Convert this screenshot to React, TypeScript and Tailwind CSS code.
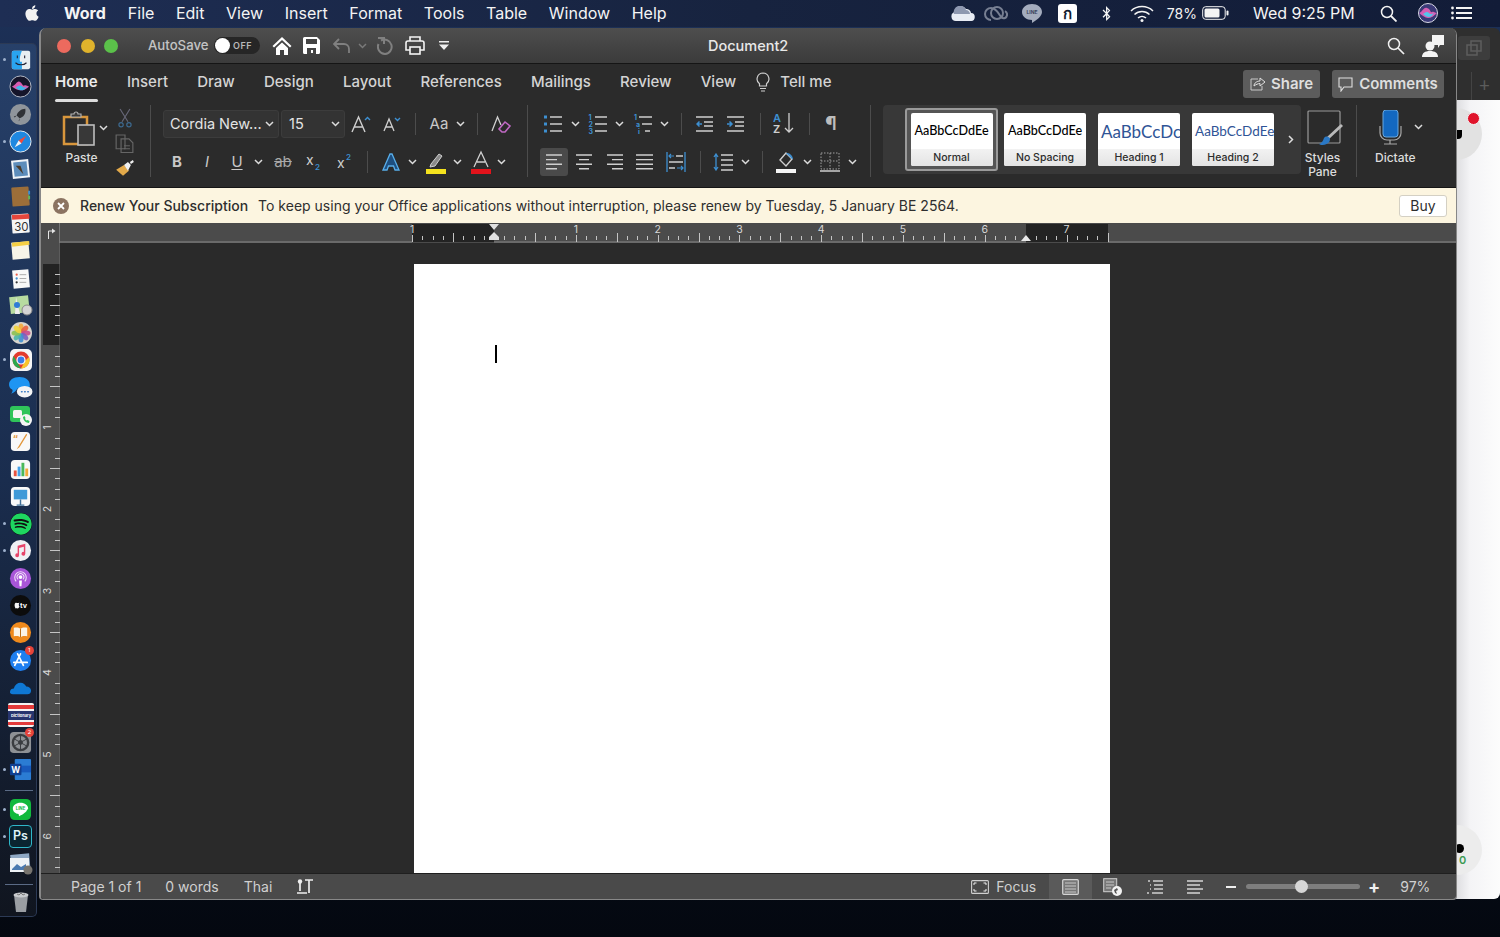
import type { ReactNode } from 'react';
import { FaApple, FaBluetoothB, FaSpotify } from 'react-icons/fa';

const ink = '#cfcfcf';
const blue = '#3d8fd1';

function Chev({ color = '#dcdcdc' }: { color?: string }) {
  return (
    <svg width="9" height="6" viewBox="0 0 9 6" className="shrink-0">
      <path d="M1 1l3.5 3.5L8 1" fill="none" stroke={color} strokeWidth="1.5" />
    </svg>
  );
}

function Sep({ c }: { c: string }) {
  return (
    <div className={`${c} flex shrink-0 justify-center`}>
      <div className="h-[22px] w-px bg-[#4c4c4c]" />
    </div>
  );
}

function S({ c, children }: { c: string; children: ReactNode }) {
  return <div className={`${c} flex h-7 shrink-0 items-center justify-center`}>{children}</div>;
}

function Lines({ rows }: { rows: number[][] }) {
  return (
    <svg width="20" height="18" viewBox="0 0 20 18">
      {rows.map(([a, b], i) => (
        <path key={i} d={`M${a} ${2 + i * 4.6}H${b}`} stroke={ink} strokeWidth="1.4" />
      ))}
    </svg>
  );
}

function ListIcon({ kind }: { kind: 'bullet' | 'number' | 'multi' }) {
  return (
    <svg width="20" height="20" viewBox="0 0 20 20">
      {[3, 10, 17].map((y, i) =>
        kind === 'bullet' ? (
          <g key={y}>
            <rect x="1" y={y - 1.5} width="3" height="3" fill={blue} />
            <path d={`M7 ${y}H19`} stroke={ink} strokeWidth="1.3" />
          </g>
        ) : kind === 'number' ? (
          <g key={y}>
            <text x="0.5" y={y + 2.5} fontSize="7" fontWeight="700" fill={blue}>{i + 1}</text>
            <path d={`M7 ${y}H19`} stroke={ink} strokeWidth="1.3" />
          </g>
        ) : (
          <g key={y}>
            <text x={1 + i * 2} y={y + 2.5} fontSize="7" fontWeight="700" fill={blue}>{['1', 'a', 'i'][i]}</text>
            <path d={`M${6 + i * 3} ${y}H${i === 2 ? 17 : 19}`} stroke={ink} strokeWidth="1.3" />
          </g>
        ),
      )}
    </svg>
  );
}

function IndentIcon({ out }: { out?: boolean }) {
  return (
    <svg width="18" height="18" viewBox="0 0 18 18">
      <path d="M0 2H17M8 7H17M8 11H17M0 16H17" stroke={ink} strokeWidth="1.3" />
      <path d={out ? 'M6 9H1M3.5 6.5L1 9l2.5 2.5' : 'M0 9H5M2.5 6.5L5 9l-2.5 2.5'} fill="none" stroke={blue} strokeWidth="1.5" />
    </svg>
  );
}

function Ribbon() {
  return (
    <div className="flex h-[87px] shrink-0 bg-[#2b2b2b]">
      {/* clipboard */}
      <div className="relative mt-[5px] flex h-[72px] w-[110px] shrink-0 self-start border-r border-[#4c4c4c]">
        <div className="flex w-[71px] flex-col items-center pl-[10px] pt-[5px]">
          <div className="flex items-center gap-[3px]">
            <svg width="34" height="36" viewBox="0 0 34 36" className="ml-[6px]">
              <path d="M2 7h23v27H2z" fill="none" stroke="#d8963c" strokeWidth="2.5" />
              <path d="M9 7V4h3a2 2 0 014 0h3v3z" fill="#3a3a3a" stroke="#b0b0b0" strokeWidth="1.2" />
              <rect x="16" y="15" width="16" height="20" fill="#383838" stroke="#bdbdbd" strokeWidth="1.6" />
            </svg>
            <Chev />
          </div>
          <div className="mt-[3px] text-[12px] font-medium text-[#dcdcdc]">Paste</div>
        </div>
        <div className="flex w-[26px] flex-col items-center gap-[6px] pt-[3px]">
          <svg width="14" height="20" viewBox="0 0 14 20">
            <path d="M2 1l8 13M12 1L4 14" stroke="#667" strokeWidth="1.2" />
            <circle cx="3" cy="17" r="2.2" fill="none" stroke="#3d6a90" strokeWidth="1.2" />
            <circle cx="11" cy="17" r="2.2" fill="none" stroke="#3d6a90" strokeWidth="1.2" />
          </svg>
          <svg width="20" height="20" viewBox="0 0 20 20">
            <path d="M1 1h9v14H1zM6 5h8l4 4v10H6z" fill="#2b2b2b" stroke="#666" strokeWidth="1.2" />
            <path d="M9 12h6M9 15h6" stroke="#666" />
          </svg>
          <svg width="20" height="18" viewBox="0 0 20 18">
            <path d="M1 11l8-5 5 6-6 5z" fill="#e2a94a" />
            <path d="M9 6l4-3 3 3-3 6zM15 3l3-2 1 2-3 2z" fill="#f0f0f0" />
          </svg>
        </div>
      </div>

      {/* font */}
      <div className="mt-[5px] flex h-[72px] w-[377px] shrink-0 flex-col gap-[10px] self-start border-r border-[#4c4c4c] pl-[12px] pt-[5px]">
        <div className="flex h-7 items-center">
          <div className="flex h-7 w-[116px] items-center justify-between rounded-[3px] border border-[#3c3c3c] bg-[#333333] pl-[6px] pr-[4px] text-[14.5px] text-[#e4e4e4]">
            Cordia New...
            <Chev />
          </div>
          <div className="ml-[2px] flex h-7 w-[64px] items-center justify-between rounded-[3px] border border-[#3c3c3c] bg-[#333333] pl-[7px] pr-[4px] text-[14.5px] text-[#e4e4e4]">
            15
            <Chev />
          </div>
          <S c="w-[32px]">
            <svg width="20" height="18" viewBox="0 0 20 18">
              <path d="M1 17L7.5 2 14 17M3.5 12h8" fill="none" stroke={ink} strokeWidth="1.4" />
              <path d="M14 5l2.5-2.5L19 5" fill="none" stroke={blue} strokeWidth="1.4" />
            </svg>
          </S>
          <S c="w-[30px]">
            <svg width="18" height="16" viewBox="0 0 18 16">
              <path d="M1 15L6 3l5 12M3 11h6" fill="none" stroke={ink} strokeWidth="1.3" />
              <path d="M12 2l2.5 2.5L17 2" fill="none" stroke={blue} strokeWidth="1.4" />
            </svg>
          </S>
          <Sep c="w-[16px]" />
          <S c="w-[32px]"><span className="text-[15px] text-[#c8c8c8]">Aa</span></S>
          <S c="w-[10px]"><Chev /></S>
          <Sep c="w-[24px]" />
          <S c="w-[24px]">
            <svg width="20" height="18" viewBox="0 0 20 18">
              <path d="M1 16L6.5 2 10 10" fill="none" stroke={ink} strokeWidth="1.3" />
              <path d="M8 14l6-7 5 4-5 6h-3z" fill="none" stroke="#c069c4" strokeWidth="1.6" />
            </svg>
          </S>
        </div>
        <div className="flex h-7 items-center text-[#c8c8c8]">
          <S c="w-[28px]"><span className="text-[15px] font-bold">B</span></S>
          <S c="w-[32px]"><span className="text-[15px] italic">I</span></S>
          <S c="w-[28px]"><span className="text-[15px] underline underline-offset-2">U</span></S>
          <S c="w-[14px]"><Chev /></S>
          <S c="w-[36px]">
            <span className="text-[15px] text-[#a8a8a8] line-through">ab</span>
          </S>
          <S c="w-[26px]">
            <svg width="16" height="22" viewBox="0 0 16 22">
              <text x="0" y="14" fontSize="14" fill={ink}>x</text>
              <text x="9" y="19" fontSize="8" fontWeight="600" fill={blue}>2</text>
            </svg>
          </S>
          <S c="w-[36px]">
            <svg width="16" height="22" viewBox="0 0 16 22">
              <text x="0" y="17" fontSize="14" fill={ink}>x</text>
              <text x="9" y="9" fontSize="8" fontWeight="600" fill={blue}>2</text>
            </svg>
          </S>
          <Sep c="w-[8px]" />
          <S c="ml-[7px] w-[26px]">
            <svg width="20" height="20" viewBox="0 0 20 20">
              <path d="M2 18L9 2h2l7 16h-4l-1.5-4h-5L6 18z" fill="#1e4f80" stroke="#58aeea" strokeWidth="1.3" />
            </svg>
          </S>
          <S c="w-[16px]"><Chev /></S>
          <S c="w-[32px]">
            <svg width="22" height="24" viewBox="0 0 22 24">
              <path d="M6 14l8-10 3 2-7 10-5 1z" fill="#8a8a8a" stroke={ink} strokeWidth="1" />
              <rect x="1" y="19" width="20" height="5" fill="#f4e21e" />
            </svg>
          </S>
          <S c="w-[10px]"><Chev /></S>
          <S c="ml-[2px] w-[34px]">
            <svg width="20" height="24" viewBox="0 0 20 24">
              <path d="M3 17L10 2l7 15M6 12h8" fill="none" stroke={ink} strokeWidth="1.3" />
              <rect x="0" y="19" width="20" height="5" fill="#e2131b" />
            </svg>
          </S>
          <S c="w-[6px]"><Chev /></S>
        </div>
      </div>

      {/* paragraph */}
      <div className="mt-[5px] flex h-[72px] w-[343px] shrink-0 flex-col gap-[10px] self-start border-r border-[#4c4c4c] pl-[12px] pt-[5px]">
        <div className="flex h-7 items-center">
          <S c="w-[26px]"><ListIcon kind="bullet" /></S>
          <S c="w-[18px]"><Chev /></S>
          <S c="w-[28px]"><ListIcon kind="number" /></S>
          <S c="w-[14px]"><Chev /></S>
          <S c="w-[34px]"><ListIcon kind="multi" /></S>
          <S c="w-[8px]"><Chev /></S>
          <Sep c="w-[26px]" />
          <S c="w-[22px]"><IndentIcon out /></S>
          <S c="w-[40px]"><IndentIcon /></S>
          <Sep c="w-[8px]" />
          <S c="w-[40px]">
            <svg width="22" height="28" viewBox="0 -3 22 28">
              <text x="0" y="9" fontSize="11" fontWeight="600" fill={blue}>A</text>
              <text x="0" y="20" fontSize="11" fontWeight="600" fill={ink}>Z</text>
              <path d="M16 0v19M12 15l4 4 4-4" fill="none" stroke={ink} strokeWidth="1.3" />
            </svg>
          </S>
          <Sep c="w-[10px]" />
          <S c="w-[34px]"><span className="text-[19px] font-bold text-[#bdbdbd]">¶</span></S>
        </div>
        <div className="flex h-7 items-center">
          <S c="w-[28px] rounded-[3px] bg-[#4a4a4a]"><Lines rows={[[2, 18], [2, 13], [2, 18], [2, 13]]} /></S>
          <S c="w-[32px]"><Lines rows={[[2, 18], [5, 15], [2, 18], [5, 15]]} /></S>
          <S c="w-[30px]"><Lines rows={[[2, 18], [7, 18], [2, 18], [7, 18]]} /></S>
          <S c="w-[30px]"><Lines rows={[[1, 18], [1, 18], [1, 18], [1, 18]]} /></S>
          <S c="w-[32px]">
            <svg width="20" height="20" viewBox="0 0 20 20">
              <path d="M1 0v20M19 0v20" stroke={blue} strokeWidth="1.3" />
              <path d="M10 4h7M3 10h14M3 16h6" stroke={ink} strokeWidth="1.3" />
              <path d="M8 4H3M5 2L3 4l2 2M11 16h6M15 14l2 2-2 2" fill="none" stroke={blue} strokeWidth="1.2" />
            </svg>
          </S>
          <Sep c="w-[16px]" />
          <S c="w-[30px]">
            <svg width="20" height="18" viewBox="0 0 20 18">
              <path d="M8 2h12M8 7h12M8 12h12M8 17h12" stroke={ink} strokeWidth="1.3" />
              <path d="M3 1v16M1 4l2-3 2 3M1 14l2 3 2-3" fill="none" stroke={blue} strokeWidth="1.3" />
            </svg>
          </S>
          <S c="w-[14px]"><Chev /></S>
          <Sep c="w-[20px]" />
          <S c="w-[28px]">
            <svg width="20" height="22" viewBox="0 0 20 22">
              <path d="M4 9l6-7 6 6-6 7z" fill="none" stroke={ink} strokeWidth="1.4" />
              <path d="M10 2c3 0 6 1 7 6l-1 0-6-6z" fill={blue} />
              <rect x="0" y="18" width="20" height="4" fill="#f5f5f5" />
            </svg>
          </S>
          <S c="w-[14px]"><Chev /></S>
          <S c="w-[32px]">
            <svg width="20" height="20" viewBox="0 0 20 20">
              <rect x="1" y="1" width="18" height="16" fill="none" stroke="#a0a0a0" strokeDasharray="1.5 1.5" />
              <path d="M10 1v16M1 9h18" stroke="#a0a0a0" strokeDasharray="1.5 1.5" />
              <path d="M0 19h20" stroke={ink} strokeWidth="1.5" />
            </svg>
          </S>
          <S c="w-[12px]"><Chev /></S>
        </div>
      </div>

      {/* styles gallery */}
      <div className="ml-[12px] mt-[5px] flex h-[69px] w-[418px] shrink-0 items-center self-start rounded-[4px] bg-[#383838] pl-[22px]">
        <div className="flex h-[63px] w-[93px] shrink-0 items-center justify-center rounded-[3px] border-2 border-[#9a9a9a] bg-[#555555]">
          <StyleCard name="Normal" preview={<span className="font-['Lato',sans-serif] text-[12.6px] font-medium text-black">AaBbCcDdEe</span>} />
        </div>
        <div className="ml-[6px]">
          <StyleCard name="No Spacing" preview={<span className="font-['Lato',sans-serif] text-[12.6px] font-medium text-black">AaBbCcDdEe</span>} />
        </div>
        <div className="ml-[12px]">
          <StyleCard name="Heading 1" preview={<span className="pl-[3px] font-['Lato',sans-serif] text-[17px] text-[#2f5496]">AaBbCcDc</span>} left />
        </div>
        <div className="ml-[12px]">
          <StyleCard name="Heading 2" preview={<span className="pl-[3px] font-['Lato',sans-serif] text-[13.5px] text-[#2f5496]">AaBbCcDdEe</span>} left />
        </div>
        <div className="ml-[12px] flex w-[9px] justify-center">
          <svg width="6" height="9" viewBox="0 0 6 9">
            <path d="M1 1l3.5 3.5L1 8" fill="none" stroke="#ddd" strokeWidth="1.5" />
          </svg>
        </div>
      </div>

      {/* styles pane */}
      <div className="mt-[5px] flex h-[72px] w-[56px] shrink-0 flex-col items-center self-start border-r border-[#4c4c4c] pr-[12px] pt-[5px] text-center text-[12px] font-medium leading-[14px] text-[#dcdcdc]">
        <svg width="38" height="36" viewBox="0 0 38 36" className="ml-[4px] shrink-0">
          <rect x="2" y="1" width="32" height="32" rx="1" fill="none" stroke="#9a9a9a" strokeWidth="1.2" />
          <path d="M36 15L22 28" stroke="#b9b9b9" strokeWidth="3" />
          <path d="M15 35c5 0 9-2 9-6 0-2-3-3-5-2-2 1-1 5-6 7z" fill="#2a78c5" />
        </svg>
        <div className="mt-[5px]">Styles<br />Pane</div>
      </div>

      {/* dictate */}
      <div className="flex w-[99px] shrink-0 flex-col items-start pt-[10px]">
        <div className="flex w-full items-start pl-[21px]">
          <svg width="24" height="35" viewBox="0 0 24 35">
            <rect x="5" y="0" width="15" height="27" rx="3" fill="#1368c0" stroke="#6aa8de" />
            <path d="M2 16v7a7 7 0 007 7h7a7 7 0 007-7v-7M12 30v4M6 34h13" fill="none" stroke="#a8a8a8" strokeWidth="1.2" />
          </svg>
          <div className="ml-[12px] mt-[14px]"><Chev /></div>
        </div>
        <div className="ml-[18px] mt-[4px] text-[12px] font-medium text-[#dcdcdc]">Dictate</div>
      </div>
    </div>
  );
}

function StyleCard({ name, preview, left }: { name: string; preview: ReactNode; left?: boolean }) {
  return (
    <div className="flex h-[53px] w-[82px] shrink-0 flex-col overflow-hidden rounded-[2px] bg-white">
      <div className={`flex h-[36px] items-center overflow-hidden whitespace-nowrap pt-[1px] ${left ? 'justify-start' : 'justify-center'}`}>{preview}</div>
      <div className="flex h-[17px] items-center justify-center bg-gradient-to-b from-[#f2f2f2] to-[#e4e4e4] text-[10.5px] font-medium text-[#2c2c2c]">
        {name}
      </div>
    </div>
  );
}

function HRuler() {
  const zero = 494;
  const step = 81.8 / 8;
  const ticks = Array.from({ length: 69 }, (_, i) => i - 8);
  return (
    <svg width="1396" height="20" viewBox="60 223 1396 20" className="block">
      <rect x="60" y="223" width="1396" height="20" fill="#4b4b4b" />
      <rect x="412" y="224" width="82" height="18" fill="#232323" />
      <rect x="1026" y="224" width="82" height="18" fill="#232323" />
      <rect x="60" y="241.5" width="352" height="1" fill="#8a8a8a" />
      <rect x="494" y="241.5" width="532" height="1" fill="#8a8a8a" />
      <rect x="1108" y="241.5" width="348" height="1" fill="#8a8a8a" />
      {ticks.map((t) => {
        const x = Math.round(zero + t * step) + 0.5;
        if (t === 0 || t === 52) return null;
        const top = t % 8 === 0 ? 235 : t % 4 === 0 ? 233 : 236;
        const end = t % 8 === 0 || t % 4 === 0 ? 242 : 240;
        return <path key={t} d={`M${x} ${top}V${end}`} stroke="#c4c4c4" strokeWidth="1" />;
      })}
      {[-1, 1, 2, 3, 4, 5, 6, 7].map((n) => (
        <text key={n} x={zero + n * 81.8} y="233" fontSize="10.5" textAnchor="middle" fill="#d8d8d8">
          {Math.abs(n)}
        </text>
      ))}
      <path d="M489 224h10l-5 6zM489 237l5-5 5 5v3h-10z" fill="#e0e0e0" />
      <path d="M1021 241l5-6 5 6z" fill="#e8e8e8" />
    </svg>
  );
}

function VRuler() {
  const zero = 345.5;
  const step = 81.8 / 8;
  const ticks = Array.from({ length: 60 }, (_, i) => i - 8);
  return (
    <svg width="19" height="630" viewBox="41 243 19 630" className="block shrink-0">
      <rect x="41" y="243" width="19" height="630" fill="#4b4b4b" />
      <rect x="43" y="264" width="17" height="81" fill="#232323" />
      <rect x="59.5" y="243" width="1" height="630" fill="#6f6f6f" />
      {ticks.map((t) => {
        if (t % 8 === 0) return null;
        const y = Math.round(zero + t * step) + 0.5;
        const half = t % 4 === 0;
        return <path key={t} d={`M${half ? 50 : 55} ${y}H60`} stroke="#c4c4c4" strokeWidth="1" />;
      })}
      {[1, 2, 3, 4, 5, 6].map((n) => (
        <text key={n} x="0" y="0" fontSize="10.5" textAnchor="middle" fill="#d8d8d8" transform={`translate(51 ${zero + n * 81.8}) rotate(-90)`}>
          {n}
        </text>
      ))}
    </svg>
  );
}

function StatusBar() {
  return (
    <div className="flex h-[26px] shrink-0 items-center border-t border-[#1f1f1f] bg-[#4a4a4a] text-[14px] text-[#d0d0d0]">
      <span className="ml-[30px]">Page 1 of 1</span>
      <span className="ml-[24px]">0 words</span>
      <span className="ml-[25px]">Thai</span>
      <svg width="18" height="16" viewBox="0 0 18 16" className="ml-[24px]">
        <circle cx="4" cy="2.5" r="2.2" fill="#eee" />
        <path d="M4 4v8M1 14h10M9 1h8M13 1v13" fill="none" stroke="#eee" strokeWidth="1.7" />
      </svg>
      <svg width="18" height="14" viewBox="0 0 18 14" className="ml-[657px]">
        <rect x="0.6" y="0.6" width="16.8" height="12.8" rx="1" fill="none" stroke="#cfcfcf" strokeWidth="1.1" />
        <path d="M3 5V3h2.5M12.5 3H15v2M15 9v2h-2.500M5.500 11H3V9" fill="none" stroke="#eee" strokeWidth="1" />
      </svg>
      <span className="ml-[7px]">Focus</span>
      <div className="ml-[13px] flex h-full w-[43px] items-center justify-center bg-[#5a5a5a]">
        <svg width="17" height="16" viewBox="0 0 17 16">
          <rect x="0.7" y="0.7" width="15.6" height="14.6" rx="1" fill="#777" stroke="#d5d5d5" strokeWidth="1.2" />
          <path d="M3 4h11M3 7h11M3 10h11M3 13h11" stroke="#c8c8c8" />
        </svg>
      </div>
      <svg width="19" height="18" viewBox="0 0 19 18" className="ml-[11px]">
        <rect x="0.7" y="0.7" width="13" height="13" fill="#777" stroke="#cfcfcf" />
        <path d="M3 4h8M3 7h8M3 10h5" stroke="#c8c8c8" />
        <circle cx="14" cy="13" r="5" fill="#f2f2f2" />
        <path d="M11 12l3-2 1 2-2 1 1 3-2-1z" fill="#555" />
      </svg>
      <svg width="18" height="14" viewBox="0 0 18 14" className="ml-[23px]">
        <path d="M3 1h2M8 1h10M5 5h1M9 5h9M5 9h1M9 9h9M2 13h2M7 13h11" stroke="#cfcfcf" strokeWidth="1.4" />
      </svg>
      <svg width="16" height="14" viewBox="0 0 16 14" className="ml-[24px]">
        <path d="M0 1h16M0 5h13M0 9h16M0 13h13" stroke="#d5d5d5" strokeWidth="1.5" />
      </svg>
      <div className="ml-[23px] h-[2px] w-[10px] bg-[#eee]" />
      <div className="relative ml-[10px] h-[5px] w-[114px] rounded-full bg-[#7e7e7e]">
        <div className="absolute left-[49px] top-[-4px] size-[13px] rounded-full bg-[#d6d6d6]" />
      </div>
      <span className="ml-[8px] text-[18px] font-bold leading-none text-[#f0f0f0]">+</span>
      <span className="ml-[20px]">97%</span>
    </div>
  );
}

function Word() {
  return (
    <div className="absolute left-[39px] top-[28px] flex h-[872px] w-[1418px] flex-col overflow-hidden rounded-b-[4px] rounded-t-[7px] border-b border-l-2 border-r border-[#888888] font-['Inter',sans-serif]">
      {/* title bar */}
      <div className="relative flex h-[36px] shrink-0 items-center border-b border-[#151515] bg-gradient-to-b from-[#4e4e4e] to-[#3b3b3b] pl-[16px]">
        <div className="size-[14px] rounded-full bg-[#ec6a5e]" />
        <div className="ml-[10px] size-[14px] rounded-full bg-[#e0b32c]" />
        <div className="ml-[9px] size-[14px] rounded-full bg-[#5bc14a]" />
        <span className="ml-[30px] w-[59px] whitespace-nowrap text-[13.2px] font-medium text-[#c4c4c4]">AutoSave</span>
        <div className="ml-[7px] flex h-[17px] w-[46px] items-center rounded-full bg-[#262626] pl-[1px]">
          <div className="size-[15px] rounded-full bg-white" />
          <span className="ml-[3px] text-[9px] font-semibold tracking-[0.5px] text-[#b8b8b8]">OFF</span>
        </div>
        <svg width="20" height="19" viewBox="0 0 20 19" className="ml-[12px]">
          <path d="M10 1L0.500 10l1.500 1.500L10 4l8 7.500L19.500 10z" fill="#fff" />
          <path d="M4 12l6-5.500 6 5.500v7h-4v-5H8v5H4z" fill="#fff" />
        </svg>
        <svg width="17" height="17" viewBox="0 0 17 17" className="ml-[11px]">
          <path d="M0 1.500A1.500 1.500 0 011.500 0H14l3 3v12.500a1.500 1.500 0 01-1.500 1.500h-14A1.500 1.500 0 010 15.500z" fill="#fff" />
          <rect x="3" y="2" width="11" height="5" fill="#444" />
          <rect x="4" y="11" width="9" height="6" fill="#444" />
          <rect x="8" y="13" width="2" height="3" fill="#fff" />
        </svg>
        <svg width="18" height="16" viewBox="0 0 18 16" className="ml-[13px]">
          <path d="M6 1L1 6l5 5M1 6h10a5 5 0 015 5v4" fill="none" stroke="#808080" strokeWidth="1.8" />
        </svg>
        <div className="ml-[7px]"><Chev color="#7a7a7a" /></div>
        <svg width="17" height="18" viewBox="0 0 17 18" className="ml-[10px]">
          <path d="M4 3.500A7.200 7.200 0 118 17a7.200 7.200 0 01-6.500-10" fill="none" stroke="#808080" strokeWidth="2" />
          <path d="M1 1h6v6" fill="none" stroke="#808080" strokeWidth="2" />
        </svg>
        <svg width="20" height="19" viewBox="0 0 20 19" className="ml-[11px]">
          <path d="M5 5V1h10v4M5 14H1V7a2 2 0 012-2h14a2 2 0 012 2v7h-4" fill="none" stroke="#f4f4f4" strokeWidth="1.6" />
          <rect x="5" y="11" width="10" height="7" fill="none" stroke="#f4f4f4" strokeWidth="1.6" />
        </svg>
        <svg width="10" height="9" viewBox="0 0 10 9" className="ml-[14px]">
          <path d="M0 0h10v1.500H0zM0 3.500h10L5 9z" fill="#eee" />
        </svg>
        <span className="absolute left-[667px] text-[14.5px] font-medium text-[#e8e8e8]">Document2</span>
        <svg width="18" height="18" viewBox="0 0 18 18" className="ml-auto">
          <circle cx="7" cy="7" r="5.500" fill="none" stroke="#f0f0f0" strokeWidth="1.5" />
          <path d="M11 11l6 6" stroke="#f0f0f0" strokeWidth="1.7" />
        </svg>
        <svg width="22" height="22" viewBox="0 0 22 22" className="ml-[17px] mr-[12px]">
          <path d="M10 0h12v10h-4l-2 3v-3h-6z" fill="#f4f4f4" />
          <circle cx="8" cy="11" r="4.500" fill="#f4f4f4" />
          <path d="M0 22c0-4 3-6 8-6s8 2 8 6z" fill="#f4f4f4" />
        </svg>
      </div>

      {/* tabs */}
      <div className="relative flex h-[36px] shrink-0 items-center gap-[29.2px] bg-[#2b2b2b] pl-[14px] text-[15px] font-medium text-[#d4d4d4]">
        <span className="relative font-semibold text-[#ececec]">
          Home
          <span className="absolute -bottom-[9px] left-0 h-[3px] w-full rounded-full bg-[#dcdcdc]" />
        </span>
        <span>Insert</span>
        <span>Draw</span>
        <span>Design</span>
        <span>Layout</span>
        <span>References</span>
        <span>Mailings</span>
        <span>Review</span>
        <span>View</span>
        <span className="-ml-[9px] flex items-center gap-[10px]">
          <svg width="14" height="20" viewBox="0 0 14 20">
            <path d="M7 1a6 6 0 00-3.500 10.800V14h7v-2.200A6 6 0 007 1z" fill="none" stroke="#cfcfcf" strokeWidth="1.2" />
            <path d="M4 16.500h6M5 19h4" stroke="#cfcfcf" strokeWidth="1.2" />
          </svg>
          Tell me
        </span>
        <div className="ml-auto mr-[12px] flex items-center gap-[12px] pt-[4px] font-semibold text-[#dedede]">
          <div className="flex h-7 w-[77px] items-center justify-center gap-[6px] rounded-[3px] bg-[#5c5c5c]">
            <svg width="15" height="14" viewBox="0 0 15 14">
              <path d="M8 2H1v11h11V9" fill="none" stroke="#c8c8c8" />
              <path d="M4 9c0-3 3-5 6-5V1l5 4-5 4V6.500c-2 0-4 1-6 2.500z" fill="none" stroke="#e0e0e0" />
            </svg>
            Share
          </div>
          <div className="flex h-7 w-[112px] items-center justify-center gap-[6px] rounded-[3px] bg-[#5c5c5c]">
            <svg width="15" height="15" viewBox="0 0 15 15">
              <path d="M1 1h13v9H6l-3 4v-4H1z" fill="none" stroke="#e0e0e0" strokeWidth="1.1" />
            </svg>
            Comments
          </div>
        </div>
      </div>

      <Ribbon />

      {/* message bar */}
      <div className="flex h-[36px] shrink-0 items-center border-t border-[#151515] bg-[#fcf5e0] pl-[12px] pr-[9px] text-[14px] text-[#2e2e2e]">
        <svg width="16" height="16" viewBox="0 0 16 16">
          <circle cx="8" cy="8" r="8" fill="#8b7361" />
          <path d="M5 5l6 6M11 5l-6 6" stroke="#fff" strokeWidth="1.8" />
        </svg>
        <span className="ml-[11px] font-medium">Renew Your Subscription</span>
        <span className="ml-[10px]">To keep using your Office applications without interruption, please renew by Tuesday, 5 January BE 2564.</span>
        <div className="ml-auto flex h-[22px] w-[48px] items-center justify-center rounded-[3px] border border-[#d4d0c4] bg-white">Buy</div>
      </div>

      {/* ruler */}
      <div className="flex h-[20px] shrink-0 bg-[#4b4b4b]">
        <div className="flex h-full w-[19px] shrink-0 items-center justify-center border-r border-[#777777] pl-[3px]">
          <svg width="9" height="11" viewBox="0 0 9 11">
            <path d="M1.500 11V3h4" fill="none" stroke="#e4e4e4" strokeWidth="1" />
            <path d="M5 0.500L8.500 3 5 5.500z" fill="#e4e4e4" />
          </svg>
        </div>
        <HRuler />
      </div>

      {/* document */}
      <div className="flex h-[630px] shrink-0 bg-[#2a2a2a]">
        <VRuler />
        <div className="ml-[354px] mt-[21px] h-[609px] w-[696px] shrink-0 bg-white pl-[81px] pt-[81px]">
          <div className="h-[18px] w-[1.5px] bg-black" />
        </div>
      </div>

      <StatusBar />
    </div>
  );
}

function BackWindow() {
  return (
    <div className="absolute left-[1440px] top-[28px] flex h-[871px] w-[60px] flex-col overflow-hidden rounded-[6px]">
      <div className="relative h-[72px] shrink-0 bg-[#2f2f2f]">
        <div className="absolute left-[18px] top-[8px] flex h-[24px] w-[32px] items-center justify-center rounded-[3px] bg-[#3d3d3d]">
          <svg width="16" height="16" viewBox="0 0 16 16">
            <path d="M5 1h10v10H5zM1 5h10v10H1z" fill="#3d3d3d" stroke="#5e5e5e" strokeWidth="1.5" />
          </svg>
        </div>
        <div className="absolute bottom-0 left-[31px] h-[28px] w-px bg-[#444]" />
        <span className="absolute bottom-[1px] left-[39px] text-[19px] text-[#5c5c5c]">+</span>
      </div>
      <div className="relative flex-1 bg-gradient-to-r from-[#c4c4c8] via-[#f4f4f6] to-[#fcfcfc]">
        <div className="absolute left-[-10px] top-[8px] size-[52px] rounded-full bg-[#e2e2e2]" />
        <div className="absolute left-[27px] top-[12px] size-[13px] rounded-full border border-[#f4f4f4] bg-[#e0142c]" />
        <div className="absolute left-[16px] top-[30px] h-[9px] w-[6px] rounded-br-[4px] bg-black" />
        <div className="absolute left-[-8px] top-[725px] size-[50px] rounded-full bg-[#ececec]" />
        <div className="absolute left-[15px] top-[744px] size-[9px] rounded-full bg-black" />
        <span className="absolute left-[19px] top-[752px] font-['Inter',sans-serif] text-[11px] font-semibold text-[#3d9a52]">0</span>
      </div>
    </div>
  );
}

function DockIcon({ name }: { name: string }) {
  switch (name) {
    case 'finder':
      return (
        <svg viewBox="0 0 24 24" className="size-[22px]">
          <rect x="2" y="2" width="20" height="20" rx="2" fill="#e8eef2" />
          <path d="M4 2h9c-2 5-3 9-2 12h2v8H4a2 2 0 01-2-2V4a2 2 0 012-2z" fill="#2aa4ef" />
          <path d="M8 7v3M16 7v3M6 15c3 3 9 3 12 0" fill="none" stroke="#223" strokeWidth="1.2" />
        </svg>
      );
    case 'siri':
      return (
        <svg viewBox="0 0 24 24" className="size-[23px]">
          <circle cx="12" cy="12" r="11" fill="#15152a" stroke="#b8bcc8" />
          <path d="M3 12c4-1 5-6 8-5s3 5 5 4 3 1 5 1c-3 3-6 4-9 4s-6-2-9-4z" fill="#d95bb0" />
          <path d="M7 13c3-2 5-3 7-1s3 1 5 0c-2 3-4 4-6 4s-4-1-6-3z" fill="#3fb7e9" />
        </svg>
      );
    case 'launchpad':
      return (
        <svg viewBox="0 0 24 24" className="size-[23px]">
          <circle cx="12" cy="12" r="11" fill="#8f959b" />
          <path d="M17 6c-4 0-8 3-9 7l3 3c4-1 7-5 6-10zM8 13l-3 1 1 1zM11 16l-1 3 1-1z" fill="#2f3236" />
        </svg>
      );
    case 'safari':
      return (
        <svg viewBox="0 0 24 24" className="size-[23px]">
          <circle cx="12" cy="12" r="11" fill="#1f88e0" stroke="#e8eef4" />
          <path d="M18 6l-8 5 3 3z" fill="#f04a3a" />
          <path d="M6 18l4-7 3 3z" fill="#f2f2f2" />
        </svg>
      );
    case 'mail':
      return (
        <svg viewBox="0 0 24 24" className="size-[23px]">
          <rect x="3" y="3" width="18" height="19" fill="#f0f4f8" transform="rotate(-6 12 12)" />
          <rect x="5" y="5" width="14" height="15" fill="#5d8dbb" transform="rotate(-6 12 12)" />
          <path d="M7 9l8 9-3-9z" fill="#4a3a2a" />
        </svg>
      );
    case 'contacts':
      return (
        <svg viewBox="0 0 24 24" className="size-[23px]">
          <rect x="3" y="2" width="18" height="20" rx="1" fill="#9c6e39" transform="rotate(-4 12 12)" />
          <path d="M20 6l2 0v4h-2z" fill="#3d8fd1" />
          <path d="M20 11h2v4h-2z" fill="#5cb85c" />
        </svg>
      );
    case 'calendar':
      return (
        <svg viewBox="0 0 24 24" className="size-[23px]">
          <rect x="3" y="2" width="18" height="20" rx="1" fill="#f5f5f5" transform="rotate(-4 12 12)" />
          <path d="M3 3l18-1 .3 5-18 1z" fill="#e5463c" />
          <text x="5.500" y="20" fontSize="12" fill="#333" fontFamily="Inter">30</text>
        </svg>
      );
    case 'notes':
      return (
        <svg viewBox="0 0 24 24" className="size-[23px]">
          <rect x="3" y="3" width="18" height="18" fill="#f7f4e8" transform="rotate(-5 12 12)" />
          <path d="M3 4l18-2 .4 4-18 2z" fill="#f5cf45" />
        </svg>
      );
    case 'reminders':
      return (
        <svg viewBox="0 0 24 24" className="size-[23px]">
          <rect x="4" y="3" width="17" height="19" fill="#f8f8f8" transform="rotate(-5 12 12)" />
          <circle cx="8" cy="8" r="1.2" fill="#ea5d4a" />
          <circle cx="8" cy="12" r="1.2" fill="#3d8fd1" />
          <circle cx="8" cy="16" r="1.2" fill="#333" />
          <path d="M11 8h7M11 12h7M11 16h7" stroke="#aaa" />
        </svg>
      );
    case 'maps':
      return (
        <svg viewBox="0 0 24 24" className="size-[24px]">
          <rect x="1" y="3" width="19" height="17" fill="#b7dba0" transform="rotate(-6 12 12)" />
          <path d="M7 4l4 17-5 0z" fill="#eee" />
          <circle cx="8" cy="12" r="3" fill="#2f7cd6" />
          <circle cx="18" cy="17" r="5" fill="#d4d4d4" stroke="#888" />
        </svg>
      );
    case 'photos':
      return (
        <svg viewBox="0 0 24 24" className="size-[24px]">
          <circle cx="12" cy="12" r="11" fill="#d9d5ce" />
          {['#f2a93b', '#e6603f', '#c74b8e', '#7b5fc0', '#3f8fd1', '#4db6a8', '#8cc152', '#f2d43b'].map((c, i) => (
            <ellipse key={c} cx="12" cy="7" rx="2.6" ry="4.5" fill={c} opacity="0.9" transform={`rotate(${i * 45} 12 12)`} />
          ))}
        </svg>
      );
    case 'chrome':
      return (
        <svg viewBox="0 0 24 24" className="size-[24px]">
          <rect x="1" y="1" width="22" height="22" rx="5" fill="#f6f6f6" />
          <circle cx="12" cy="12" r="8.5" fill="#e33b2e" />
          <path d="M4.600 8l4 7 3.400 5.500A8.500 8.500 0 014.600 8z" fill="#2da94f" />
          <path d="M20 9a8.500 8.500 0 01-8 11.500L16 13z" fill="#f8c52c" />
          <circle cx="12" cy="12" r="4" fill="#3b7de8" stroke="#fff" strokeWidth="1.2" />
        </svg>
      );
    case 'messages':
      return (
        <svg viewBox="0 0 24 24" className="size-[25px]">
          <path d="M11 2c6 0 10 3 10 8 0 1-.3 2-1 3H9c-1 2-3 4-6 5 1-1 2-3 1-4-2-1-3-3-3-5 0-4 4-7 10-7z" fill="#1e95f2" />
          <ellipse cx="16" cy="16" rx="7.5" ry="5.5" fill="#f4f4f4" />
          <path d="M13 16h.5M16 16h.5M19 16h.5" stroke="#3a7cc4" strokeWidth="1.5" strokeLinecap="round" />
        </svg>
      );
    case 'facetime':
      return (
        <svg viewBox="0 0 24 24" className="size-[24px]">
          <rect x="1" y="3" width="20" height="16" rx="3" fill="#2fc45a" />
          <rect x="4" y="7" width="9" height="8" rx="1.5" fill="#f4f4f4" />
          <circle cx="17" cy="17" r="6" fill="#f4f4f4" />
          <path d="M14 14c0 3 3 6 6 6l.5-2-2-1-1 .5-1.500-1.500.5-1-1-2z" fill="#2fc45a" />
        </svg>
      );
    case 'pages':
      return (
        <svg viewBox="0 0 24 24" className="size-[23px]">
          <rect x="2" y="2" width="20" height="20" rx="4" fill="#f8f8f8" />
          <path d="M18 4L10 17l-2 3 3-2 8-13z" fill="#e2963a" />
          <text x="4" y="12" fontSize="10" fontWeight="700" fill="#e2963a" fontFamily="Inter">“</text>
        </svg>
      );
    case 'numbers':
      return (
        <svg viewBox="0 0 24 24" className="size-[23px]">
          <rect x="2" y="2" width="20" height="20" rx="4" fill="#f8f8f8" />
          <rect x="5" y="13" width="3" height="6" fill="#e8533f" />
          <rect x="9" y="9" width="3" height="10" fill="#45a0e8" />
          <rect x="13" y="5" width="3" height="14" fill="#49b85a" />
          <rect x="17" y="11" width="3" height="8" fill="#f2a93b" />
        </svg>
      );
    case 'keynote':
      return (
        <svg viewBox="0 0 24 24" className="size-[23px]">
          <rect x="2" y="2" width="20" height="20" rx="4" fill="#f8f8f8" />
          <rect x="5" y="5" width="14" height="10" fill="#3f9ad8" />
          <path d="M12 15v6M8 21h8" stroke="#3f6f98" strokeWidth="1.5" />
        </svg>
      );
    case 'spotify':
      return <FaSpotify className="size-[22px] rounded-full bg-[#101010] text-[#1ed760]" />;
    case 'music':
      return (
        <svg viewBox="0 0 24 24" className="size-[23px]">
          <circle cx="12" cy="12" r="11" fill="#eff0f4" />
          <path d="M9 7l8-2v10.500a2 2 0 11-1.500-2V8L10.500 9.300V17a2 2 0 11-1.500-2z" fill="#e6456a" />
        </svg>
      );
    case 'podcasts':
      return (
        <svg viewBox="0 0 24 24" className="size-[23px]">
          <circle cx="12" cy="12" r="11" fill="#a855d8" />
          <circle cx="12" cy="10.5" r="2" fill="#fff" />
          <path d="M10.500 14h3l-.5 6h-2z" fill="#fff" />
          <path d="M7.500 15a6 6 0 119 0M9.500 13a3.500 3.500 0 115 0" fill="none" stroke="#f2e0fa" strokeWidth="1.1" />
        </svg>
      );
    case 'tv':
      return (
        <svg viewBox="0 0 24 24" className="size-[23px]">
          <circle cx="12" cy="12" r="11" fill="#0c0c0c" />
          <path d="M7 9c1 0 1.500.5 2 .5S10 9 11 9c-1 1-1 3 0 4-.5 1-1 2-2 2s-1-.5-2 0c-1-1-2-5 0-6z" fill="#f4f4f4" />
          <text x="11.500" y="15" fontSize="7.5" fontWeight="700" fill="#f4f4f4" fontFamily="Inter">tv</text>
        </svg>
      );
    case 'books':
      return (
        <svg viewBox="0 0 24 24" className="size-[23px]">
          <circle cx="12" cy="12" r="11" fill="#ef8a1c" />
          <path d="M12 8c-2-1.500-4-1.500-7-1v9c3-.5 5-.5 7 1 2-1.500 4-1.500 7-1V7c-3-.5-5-.5-7 1z" fill="#fbf4e6" />
          <path d="M12 8v9" stroke="#b86a12" />
        </svg>
      );
    case 'appstore':
      return (
        <div className="relative">
          <svg viewBox="0 0 24 24" className="size-[23px]">
            <circle cx="12" cy="12" r="11" fill="#1f7ff0" />
            <path d="M12 5l-6 12M9 5l6 12M5 14h14" stroke="#fff" strokeWidth="1.8" strokeLinecap="round" />
          </svg>
          <span className="absolute -right-[2px] -top-[3px] flex size-[9px] items-center justify-center rounded-full bg-[#e5433a] text-[6px] text-white">1</span>
        </div>
      );
    case 'onedrive':
      return (
        <svg viewBox="0 0 24 24" className="size-[23px]">
          <path d="M1 17c0-3 2-4 4-4 1-4 4-6 7-6s5 2 6 4c3 0 5 2 5 4s-1 4-4 4H4c-2 0-3-1-3-2z" fill="#0f78d4" />
        </svg>
      );
    case 'dictionary':
      return (
        <svg viewBox="0 0 26 24" className="h-[24px] w-[26px]">
          <rect x="0" y="0" width="26" height="24" rx="2" fill="#f4f4f4" />
          <rect x="0" y="2" width="26" height="4" fill="#e33a3a" />
          <rect x="0" y="8" width="26" height="9" fill="#27356e" />
          <rect x="0" y="19" width="26" height="3" fill="#e33a3a" />
          <text x="13" y="14" fontSize="4" textAnchor="middle" fontWeight="700" fill="#fff" fontFamily="Inter">Dictionary</text>
        </svg>
      );
    case 'prefs':
      return (
        <div className="relative">
          <svg viewBox="0 0 24 24" className="size-[23px]">
            <rect x="1" y="1" width="22" height="22" rx="4" fill="#8e9195" />
            <circle cx="12" cy="12" r="8" fill="none" stroke="#3b3d40" strokeWidth="2.5" />
            <circle cx="12" cy="12" r="2.5" fill="#3b3d40" />
            <path d="M12 4v16M5 8l14 8M19 8L5 16" stroke="#3b3d40" />
          </svg>
          <span className="absolute -right-[2px] -top-[3px] flex size-[9px] items-center justify-center rounded-full bg-[#e5433a] text-[6px] text-white">2</span>
        </div>
      );
    case 'word':
      return (
        <svg viewBox="0 0 24 24" className="size-[23px]">
          <rect x="6" y="1" width="17" height="22" rx="1" fill="#2b7cd3" />
          <rect x="6" y="8" width="17" height="7" fill="#185abd" />
          <rect x="1" y="6" width="12" height="12" rx="1" fill="#103f91" />
          <text x="7" y="15.5" fontSize="9" textAnchor="middle" fontWeight="700" fill="#fff" fontFamily="Inter">W</text>
        </svg>
      );
    case 'line':
      return (
        <svg viewBox="0 0 24 24" className="size-[23px]">
          <rect x="1" y="1" width="22" height="22" rx="5" fill="#11b93c" />
          <path d="M12 5c-4.500 0-8 2.700-8 6 0 3 2.500 5.300 6 5.800l.5 2.200c2-1 7-3.500 8-6 .8-1 1.500-1.500 1.500-2 0-3.300-3.500-6-8-6z" fill="#fff" />
          <text x="12" y="13" fontSize="4.5" textAnchor="middle" fontWeight="700" fill="#11b93c" fontFamily="Inter">LINE</text>
        </svg>
      );
    case 'ps':
      return (
        <div className="flex size-[23px] items-center justify-center rounded-[4px] border-[1.5px] border-[#2fb7c9] bg-[#0a2430] font-['Inter',sans-serif] text-[12.5px] font-semibold text-[#dff2f6]">
          Ps
        </div>
      );
    case 'preview':
      return (
        <svg viewBox="0 0 24 24" className="size-[24px]">
          <rect x="2" y="2" width="19" height="15" fill="#8fa8c4" transform="rotate(-5 12 12)" />
          <rect x="1" y="6" width="19" height="14" fill="#eef2f6" />
          <path d="M3 17l5-5 4 3 5-3v6H3z" fill="#4a79b0" />
          <circle cx="19" cy="18" r="4.5" fill="#77746e" />
        </svg>
      );
    default:
      return (
        <svg viewBox="0 0 24 24" className="size-[24px]">
          <path d="M5 5h14l-2 17H7z" fill="#9a9ea3" />
          <ellipse cx="12" cy="5" rx="7.5" ry="2.5" fill="#c8cbce" />
          <path d="M8 4l2 1 2-2 2 2 2-1" stroke="#777" fill="none" />
        </svg>
      );
  }
}

const dockTop: [string, boolean][] = [
  ['finder', true], ['siri', false], ['launchpad', false], ['safari', true], ['mail', false], ['contacts', false],
  ['calendar', false], ['notes', false], ['reminders', false], ['maps', false], ['photos', false], ['chrome', true],
  ['messages', false], ['facetime', false], ['pages', false], ['numbers', false], ['keynote', false], ['spotify', true],
  ['music', true], ['podcasts', false], ['tv', false], ['books', false], ['appstore', false], ['onedrive', false],
  ['dictionary', false], ['prefs', false], ['word', true],
];

function DockItem({ name, on }: { name: string; on: boolean }) {
  return (
    <div className="relative flex h-[27.3px] w-full shrink-0 items-center justify-center pl-[5px]">
      {on && <div className="absolute left-[3px] top-[12px] size-[3px] rounded-full bg-[#9db0cc]" />}
      <DockIcon name={name} />
    </div>
  );
}

function Dock() {
  return (
    <div className="absolute left-0 top-[43px] flex h-[874px] w-[37px] flex-col rounded-r-[5px] border-y border-r border-[#2c3a55] bg-gradient-to-b from-[#274069] via-[#1a2d4e] to-[#10151f] pt-[2px]">
      {dockTop.map(([name, on]) => (
        <DockItem key={name} name={name} on={on} />
      ))}
      <div className="ml-[5px] mt-[7px] h-px w-[28px] bg-[#5a6a85]" />
      <div className="mt-[5px]"><DockItem name="line" on /></div>
      <DockItem name="ps" on />
      <DockItem name="preview" on={false} />
      <div className="ml-[5px] mt-[6px] h-px w-[28px] bg-[#5a6a85]" />
      <div className="mt-[4px]"><DockItem name="trash" on={false} /></div>
    </div>
  );
}

function MenuBar() {
  return (
    <div className="flex h-[27px] shrink-0 items-center bg-gradient-to-r from-[#1e2e54] via-[#17233f] to-[#121c38] pb-[1px] font-['Inter',sans-serif] text-[16px] text-[#f4f4f4]">
      <FaApple className="ml-[23px] size-[18px] text-[#f2f2f2]" />
      <span className="ml-[23px] font-bold">Word</span>
      <div className="ml-[22px] flex gap-[21.6px]">
        <span>File</span>
        <span>Edit</span>
        <span>View</span>
        <span>Insert</span>
        <span>Format</span>
        <span>Tools</span>
        <span>Table</span>
        <span>Window</span>
        <span>Help</span>
      </div>
      <div className="ml-auto flex items-center">
        <svg width="24" height="15" viewBox="0 0 24 15">
          <path d="M5 15a4.500 4.500 0 01-1-8.900A6 6 0 0115 3a4.500 4.500 0 015 4 4 4 0 01-.5 8z" fill="#e8ecf4" />
          <path d="M3 8a6 6 0 0112-4c2 0 4 2 4 4H3z" fill="#8e98b0" />
        </svg>
        <svg width="24" height="17" viewBox="0 0 24 17" className="ml-[9px]">
          <path d="M7 15a6 6 0 010-12c4 0 6 3 8 6s3 5 6 4a4 4 0 000-7" fill="none" stroke="#777f92" strokeWidth="2" />
          <circle cx="13" cy="8" r="6" fill="none" stroke="#777f92" strokeWidth="2" />
        </svg>
        <svg width="20" height="19" viewBox="0 0 20 19" className="ml-[14px]">
          <path d="M10 0c5.500 0 10 3.500 10 8 0 4-5 8-10 11v-3C4.500 16 0 12.500 0 8s4.500-8 10-8z" fill="#a4acbd" />
          <text x="10" y="10" fontSize="5" textAnchor="middle" fontWeight="700" fill="#3a435c">LINE</text>
        </svg>
        <div className="ml-[16px] flex size-[19px] items-center justify-center rounded-[3px] bg-white font-['Noto_Sans',sans-serif] text-[15px] font-bold leading-none text-[#111a30]">ก</div>
        <FaBluetoothB className="ml-[22px] size-[15px]" />
        <svg width="24" height="17" viewBox="0 0 24 17" className="ml-[16px]">
          <path d="M1 6a16 16 0 0122 0M4.500 9.500a11 11 0 0115 0M8 13a6 6 0 018 0" fill="none" stroke="#f4f4f4" strokeWidth="1.5" />
          <circle cx="12" cy="15.5" r="1.5" fill="#f4f4f4" />
        </svg>
        <span className="ml-[13px] text-[14px]">78%</span>
        <svg width="27" height="14" viewBox="0 0 27 14" className="ml-[5px]">
          <rect x="0.7" y="0.7" width="22.5" height="12.6" rx="3" fill="none" stroke="#f4f4f4" />
          <rect x="2.5" y="2.5" width="15" height="9" rx="1.5" fill="#f4f4f4" />
          <rect x="24.5" y="4.5" width="2" height="5" rx="1" fill="#f4f4f4" />
        </svg>
        <span className="ml-[24px] w-[102px] whitespace-nowrap text-[16px]">Wed 9:25 PM</span>
        <svg width="17" height="17" viewBox="0 0 17 17" className="ml-[25px]">
          <circle cx="7" cy="7" r="5.500" fill="none" stroke="#f4f4f4" strokeWidth="1.5" />
          <path d="M11 11l5.500 5.500" stroke="#f4f4f4" strokeWidth="1.8" />
        </svg>
        <svg width="20" height="20" viewBox="0 0 20 20" className="ml-[21px]">
          <circle cx="10" cy="10" r="9.5" fill="#3b3a78" stroke="#d8d8e4" />
          <path d="M1 10c4-1 4-6 8-5s3 5 5 4 3 1 5 1c-3 3-6 5-9 5s-6-3-9-5z" fill="#d85fb4" />
          <path d="M5 11c3-2 4-3 6-1s3 1 5 0c-2 3-3 4-5 4s-4-1-6-3z" fill="#54c6ea" />
        </svg>
        <svg width="21" height="14" viewBox="0 0 21 14" className="ml-[13px] mr-[28px]">
          <path d="M5 2h16M5 7h16M5 12h16" stroke="#f4f4f4" strokeWidth="2" />
          <circle cx="1.5" cy="2" r="1.4" fill="#f4f4f4" />
          <circle cx="1.5" cy="7" r="1.4" fill="#f4f4f4" />
          <circle cx="1.5" cy="12" r="1.4" fill="#f4f4f4" />
        </svg>
      </div>
    </div>
  );
}

export default function App() {
  return (
    <div className="relative flex h-[937px] w-[1500px] flex-col overflow-hidden bg-gradient-to-b from-[#1d3158] via-[#0e1a30] to-[#040810]">
      <MenuBar />
      <Dock />
      <BackWindow />
      <Word />
    </div>
  );
}
